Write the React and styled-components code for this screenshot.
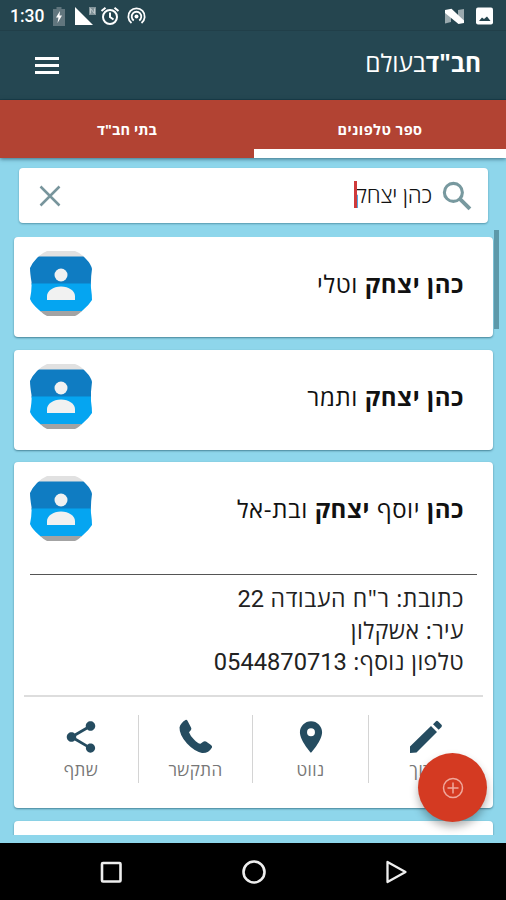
import React from 'react';
import styled, { createGlobalStyle } from 'styled-components';

const Global = createGlobalStyle`
  * { box-sizing: border-box; }
  body { margin: 0; background: #000; }
`;

const Screen = styled.div`
  width: 506px;
  height: 900px;
  display: flex;
  flex-direction: column;
  position: relative;
  overflow: hidden;
  direction: rtl;
  font-family: 'Open Sans', 'Noto Sans', sans-serif;
`;

const StatusBar = styled.header`
  direction: ltr;
  flex: 0 0 30px;
  background: #25454f;
  border-bottom: 1px solid #213f49;
  display: flex;
  align-items: center;
  padding: 2px 13px 0 10px;
`;

const Clock = styled.span`
  width: 43px;
  font: 500 17.5px/28px Roboto, sans-serif;
  color: #fff;
`;

const StatusIcon = styled.svg`
  display: block;
  flex: none;
  margin-left: ${(p) => p.$gap || 0}px;
`;

const Spacer = styled.div`
  flex: 1;
`;

const AppBar = styled.div`
  direction: ltr;
  flex: 0 0 69px;
  background: #254752;
  display: flex;
  align-items: center;
  justify-content: space-between;
  padding: 0 25px 0 35px;
  border-bottom: 1px solid #1c3d48;
`;

const MenuButton = styled.button`
  border: 0;
  padding: 0;
  background: none;
  width: 24px;
  height: 17px;
  display: flex;
  flex-direction: column;
  justify-content: space-between;
`;

const MenuBar = styled.span`
  height: 3px;
  width: 24px;
  background: #fff;
`;

const Brand = styled.h1`
  direction: rtl;
  margin: 0;
  padding-bottom: 4px;
  font-size: 24.5px;
  line-height: 34px;
  font-weight: 400;
  color: #fff;
  white-space: nowrap;
  b { font-weight: 700; }
`;

const Tabs = styled.nav`
  flex: 0 0 58px;
  display: flex;
  background: #b24333;
  box-shadow: 0 1px 4px rgba(0, 40, 60, 0.6);
  z-index: 1;
`;

const Tab = styled.div`
  flex: 1 0 ${(p) => (p.$active ? 252 : 254)}px;
  text-align: center;
  color: #fff;
  font-weight: 700;
  font-size: 14.5px;
  line-height: 59px;
  height: 58px;
  border-bottom: ${(p) => (p.$active ? '9px solid #fff' : '0')};
  letter-spacing: ${(p) => p.$spacing || 0}px;
`;

const Content = styled.main`
  flex: 0 0 685px;
  background: #8ed6eb;
  padding: 10px 13px 0 14px;
  overflow: hidden;
`;

const SearchBox = styled.div`
  margin: 0 5px 14px;
  height: 55px;
  border-radius: 4px;
  background: #fff;
  box-shadow: 0 1px 2px rgba(0, 60, 80, 0.4);
  display: flex;
  align-items: center;
  justify-content: space-between;
  padding: 0 16px 0 20px;
`;

const Query = styled.span`
  flex: 1;
  display: flex;
  align-items: center;
  font-weight: 300;
  font-size: 22.3px;
  line-height: 32px;
  color: #111;
  margin-right: 10px;
  padding-bottom: 2px;
  letter-spacing: -0.15px;
`;

const Caret = styled.i`
  width: 2.5px;
  height: 27px;
  margin-right: -3px;
  background: #cf3a3a;
`;

const CardList = styled.div`
  height: 598px;
  overflow: hidden;
  margin: 0 -4px;
  padding: 0 4px;
`;

const Card = styled.article`
  background: #fff;
  border-radius: 4px;
  height: ${(p) => p.$height || 100}px;
  margin-bottom: 12.5px;
  box-shadow: 0 1px 2px rgba(0, 50, 70, 0.5);
`;

const CardHeader = styled.div`
  height: 100px;
  display: flex;
  justify-content: space-between;
  padding: 14px 29px 0 16px;
`;

const Name = styled.h2`
  margin: 0;
  padding-top: 15px;
  font-size: 24px;
  line-height: 36px;
  font-weight: 400;
  color: #111;
  white-space: nowrap;
  letter-spacing: 0.6px;
  b { font-weight: 700; }
`;

const Details = styled.div`
  margin: 12px 16px 0;
  border-top: 1.5px solid #555;
  padding: 8px 13px 0;
  height: 121px;
`;

const Detail = styled.p`
  margin: 0;
  font-size: 23px;
  line-height: 31.5px;
  height: 31.5px;
  color: #222;
  white-space: nowrap;
  letter-spacing: ${(p) => p.$spacing || 0}px;
`;

const Digits = styled.span`
  font-family: Roboto, sans-serif;
  font-size: 23.7px;
  line-height: 1;
  letter-spacing: 0;
`;

const Actions = styled.div`
  margin: 0 10px;
  border-top: 2px solid #ddd;
  height: 100px;
  padding-top: 18px;
  display: grid;
  grid-template-columns: 115px 116px 114px 114px;
`;

const Action = styled.div`
  height: 68px;
  padding-top: 3px;
  display: flex;
  flex-direction: column;
  align-items: center;
  color: #254c60;
  border-left: ${(p) => (p.$last ? '0' : '1.5px solid #d4d4d4')};
`;

const ActionLabel = styled.span`
  font-size: 17px;
  line-height: 24px;
  margin-top: 2px;
  color: #777;
  letter-spacing: 0.4px;
`;

const ScrollThumb = styled.div`
  position: absolute;
  left: 494px;
  top: 230px;
  width: 5px;
  height: 99px;
  background: #5d99aa;
`;

const Fab = styled.button`
  position: absolute;
  left: 418px;
  top: 753px;
  width: 69px;
  height: 69px;
  border: 0;
  padding: 0;
  border-radius: 50%;
  background: #d43a22;
  box-shadow: 0 5px 8px rgba(0, 0, 0, 0.3);
  display: flex;
  align-items: center;
  justify-content: center;
`;

const NavBar = styled.footer`
  direction: ltr;
  flex: 0 0 58px;
  background: #000;
  display: flex;
  justify-content: space-between;
  align-items: center;
  padding: 0 98px 0 99px;
`;

const Avatar = () => (
  <svg width="62" height="65" viewBox="0 0 62 65">
    <defs>
      <clipPath id="badge">
        <path d="M17 0H45Q51 2 56 8Q61 13 62 18Q60.500 28 61 37Q62 44 62 49Q59 54 53 59Q48 64 45 65H17Q13 63 9 59Q2 53 0 48Q2 38 1.500 31Q0 22 0 17Q2 12 7 7Q12 2 17 0Z" />
      </clipPath>
    </defs>
    <g clipPath="url(#badge)">
      <rect width="62" height="6" fill="#e1e1e1" />
      <rect y="5.500" width="62" height="28" fill="#0f7cc2" />
      <rect y="32.500" width="62" height="28" fill="#05a5f1" />
      <rect y="60" width="62" height="5" fill="#a3a3a3" />
    </g>
    <circle cx="31" cy="24" r="6.500" fill="#f1f1f1" />
    <path d="M17 49V45C17 40 23 35.500 31 35.500S45 40 45 45V49Z" fill="#f1f1f1" />
  </svg>
);

const paths = {
  share: 'M18 16.080c-.76 0-1.440.3-1.960.77L8.910 12.700c.05-.23.09-.46.09-.7s-.04-.47-.09-.7l7.050-4.110c.54.5 1.250.81 2.040.81 1.660 0 3-1.340 3-3s-1.340-3-3-3-3 1.340-3 3c0 .24.04.47.09.7L8.040 9.810C7.500 9.310 6.790 9 6 9c-1.660 0-3 1.340-3 3s1.340 3 3 3c.79 0 1.500-.31 2.040-.81l7.120 4.160c-.05.21-.08.43-.08.65 0 1.610 1.310 2.920 2.920 2.920s2.920-1.310 2.920-2.920-1.310-2.920-2.920-2.920z',
  place: 'M12 2C8.130 2 5 5.130 5 9c0 5.250 7 13 7 13s7-7.750 7-13c0-3.870-3.130-7-7-7zm0 9.500a2.500 2.500 0 1 1 0-5 2.500 2.500 0 0 1 0 5z',
};

const ActionIcon = ({ kind }) => {
  if (kind === 'call')
    return (
      <svg width="38" height="38" viewBox="0 0 38 38" fill="currentColor">
        <path d="M8.500 2Q3.500 5 2.500 9.500Q2.300 17 10 25.500Q17 33 25 35Q31.500 35.500 35 29.500Q35.500 28 34 27L29 23.500Q27.500 22.700 26.200 23.800L23.500 25.800Q20.500 25.500 17 21.500Q13 17.500 12 14.300L14 12Q14.800 10.800 14 9.500L10.500 2.800Q9.700 1.500 8.500 2Z" />
      </svg>
    );
  if (kind === 'edit')
    return (
      <svg width="38" height="38" viewBox="0 0 38 38" fill="currentColor">
        <path d="M3 35V28.500L24 8L30 14L9.500 34.500ZM26 6.200L29 3.200Q30 2.400 31.200 3.500L34.500 6.800Q35.400 7.900 34.500 8.900L31.700 11.800Z" />
      </svg>
    );
  return (
    <svg width="38" height="38" viewBox="0 0 24 24" fill="currentColor">
      <path d={paths[kind]} />
    </svg>
  );
};

const actions = [
  { kind: 'edit', label: 'ערוך' },
  { kind: 'place', label: 'נווט' },
  { kind: 'call', label: 'התקשר' },
  { kind: 'share', label: 'שתף' },
];

export default function App() {
  return (
    <Screen>
      <Global />
      <StatusBar>
        <Clock>1:30</Clock>
        <StatusIcon width="12" height="19" viewBox="0 0 12 19">
          <path d="M3.500 0H8.500V2H12V19H0V2H3.500Z" fill="#61767e" />
          <path d="M7 4L3 10.500H5.500L4.500 16L9 8.500H6.500Z" fill="#fff" />
        </StatusIcon>
        <StatusIcon $gap={9} width="23" height="20" viewBox="0 0 23 20">
          <path d="M1 1V19H19Z" fill="#fff" />
          <rect x="15" y="1" width="7" height="8" fill="#82949a" />
          <path d="M16.500 7.500V2.500L20.500 7.500V2.500" fill="none" stroke="#c0cacd" />
        </StatusIcon>
        <StatusIcon $gap={3} width="20" height="20" viewBox="0 0 20 20" fill="none" stroke="#fff" strokeWidth="2">
          <circle cx="10" cy="11" r="7" />
          <path d="M10 6.500V11L13.500 13.500M1.500 5L5.500 1.700M18.500 5L14.500 1.700" />
        </StatusIcon>
        <StatusIcon $gap={7} width="19" height="20" viewBox="0 0 19 20" fill="none" stroke="#fff" strokeWidth="1.800">
          <circle cx="9.500" cy="10.500" r="2" fill="#fff" stroke="none" />
          <path d="M4.500 17A8.200 8.200 0 1 1 14.500 17" />
          <path d="M6.800 14.500A4.800 4.800 0 1 1 12.200 14.500" />
        </StatusIcon>
        <Spacer />
        <StatusIcon width="19" height="17" viewBox="0 0 19 17">
          <path d="M0 2L6 5V14L0 15.500ZM13 2L19 1V15L13 12Z" fill="#9aa9ae" />
          <path d="M0 2L6.500 .8L19 12.500V15L13.500 16L0 5Z" fill="#fff" />
        </StatusIcon>
        <StatusIcon $gap={12} width="17" height="18" viewBox="0 0 17 18">
          <rect y=".5" width="17" height="17" rx="2" fill="#fff" />
          <path d="M3 14L6 10.500L8 12L11 9.500L14.500 14Z" fill="#25454f" />
        </StatusIcon>
      </StatusBar>
      <AppBar>
        <MenuButton>
          <MenuBar />
          <MenuBar />
          <MenuBar />
        </MenuButton>
        <Brand>
          <b>חב"ד</b>בעולם
        </Brand>
      </AppBar>
      <Tabs>
        <Tab $active $spacing={0.45}>ספר טלפונים</Tab>
        <Tab $spacing={0.1}>בתי חב"ד</Tab>
      </Tabs>
      <Content>
        <SearchBox>
          <svg width="30" height="30" viewBox="0 0 29 29" fill="none" stroke="#78999f">
            <circle cx="11" cy="11" r="8.700" strokeWidth="3" />
            <path d="M17 17L27 27" strokeWidth="3.800" />
          </svg>
          <Query>
            כהן יצחק
            <Caret />
          </Query>
          <svg width="22" height="22" viewBox="0 0 22 22" fill="none" stroke="#78959c" strokeWidth="2.500">
            <path d="M1.500 1.500L20.500 20.500M20.500 1.500L1.500 20.500" />
          </svg>
        </SearchBox>
        <CardList>
          <Card>
            <CardHeader>
              <Name><b>כהן יצחק</b> וטלי</Name>
              <Avatar />
            </CardHeader>
          </Card>
          <Card>
            <CardHeader>
              <Name><b>כהן יצחק</b> ותמר</Name>
              <Avatar />
            </CardHeader>
          </Card>
          <Card $height={346}>
            <CardHeader>
              <Name><b>כהן</b> יוסף <b>יצחק</b> ובת-אל</Name>
              <Avatar />
            </CardHeader>
            <Details>
              <Detail $spacing={0.6}>כתובת: ר"ח העבודה <Digits>22</Digits></Detail>
              <Detail $spacing={0.4}>עיר: אשקלון</Detail>
              <Detail $spacing={0.4}>טלפון נוסף: <Digits>0544870713</Digits></Detail>
            </Details>
            <Actions>
              {actions.map((a, i) => (
                <Action key={a.kind} $last={i === actions.length - 1}>
                  <ActionIcon kind={a.kind} />
                  <ActionLabel>{a.label}</ActionLabel>
                </Action>
              ))}
            </Actions>
          </Card>
          <Card />
        </CardList>
      </Content>
      <ScrollThumb />
      <Fab>
        <svg width="22" height="22" viewBox="0 0 22 22" fill="none" stroke="#f0a89c" strokeWidth="1.500">
          <circle cx="11" cy="11" r="9.500" />
          <path d="M11 5.500V16.500M5.500 11H16.500" />
        </svg>
      </Fab>
      <NavBar>
        <svg width="24" height="24" viewBox="0 0 24 24" fill="none" stroke="#eee" strokeWidth="2.600">
          <rect x="3" y="3" width="18.500" height="18.500" rx="1" />
        </svg>
        <svg width="24" height="24" viewBox="0 0 24 24" fill="none" stroke="#eee" strokeWidth="2.600">
          <circle cx="12" cy="12" r="10.500" />
        </svg>
        <svg width="24" height="24" viewBox="0 0 24 24" fill="none" stroke="#eee" strokeWidth="2.300" strokeLinejoin="round">
          <path d="M3.500 2L21.500 12L3.500 22Z" />
        </svg>
      </NavBar>
    </Screen>
  );
}
